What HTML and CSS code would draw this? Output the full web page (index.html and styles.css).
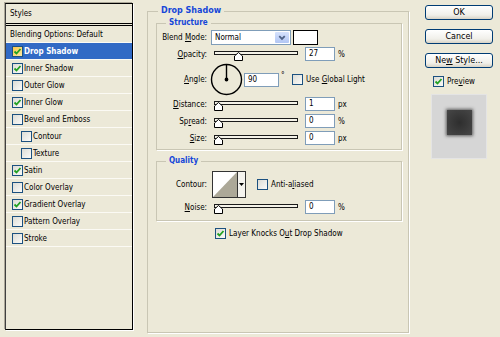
FILE: index.html
```html
<html>
<head>
  <title>Layer Style</title>
  <link rel="stylesheet" href="styles.css">
</head>
<body>
<div class="dialog">
  <div class="styles-list">
    <div class="list-head">Styles</div>
    <div class="item plain">Blending Options: Default</div>
    <div class="item selected"><span class="check focus"><svg viewBox="0 0 9 9"><polyline points="1.5,4.5 3.5,6.5 7.5,2"/></svg></span>Drop Shadow</div>
    <div class="item"><span class="check"><svg viewBox="0 0 9 9"><polyline points="1.5,4.5 3.5,6.5 7.5,2"/></svg></span>Inner Shadow</div>
    <div class="item"><span class="check"></span>Outer Glow</div>
    <div class="item"><span class="check"><svg viewBox="0 0 9 9"><polyline points="1.5,4.5 3.5,6.5 7.5,2"/></svg></span>Inner Glow</div>
    <div class="item"><span class="check"></span>Bevel and Emboss</div>
    <div class="item sub"><span class="check"></span>Contour</div>
    <div class="item sub"><span class="check"></span>Texture</div>
    <div class="item"><span class="check"><svg viewBox="0 0 9 9"><polyline points="1.5,4.5 3.5,6.5 7.5,2"/></svg></span>Satin</div>
    <div class="item"><span class="check"></span>Color Overlay</div>
    <div class="item"><span class="check"><svg viewBox="0 0 9 9"><polyline points="1.5,4.5 3.5,6.5 7.5,2"/></svg></span>Gradient Overlay</div>
    <div class="item"><span class="check"></span>Pattern Overlay</div>
    <div class="item"><span class="check"></span>Stroke</div>
  </div>

  <fieldset class="group effect">
    <legend>Drop Shadow</legend>

    <fieldset class="group structure">
      <legend>Structure</legend>
      <div class="row blend">
        <label class="lbl"><span>Blend <u>M</u>ode:</span></label>
        <div class="select">
          <span class="select-value">Normal</span>
          <span class="select-drop"><svg viewBox="0 0 12 12"><polyline points="3,4.5 6,7.5 9,4.5"/></svg></span>
        </div>
        <span class="swatch"></span>
      </div>
      <div class="row slider-row">
        <label class="lbl"><span><u>O</u>pacity:</span></label>
        <div class="slider">
          <div class="track"></div>
          <svg class="thumb" style="left: 20px" viewBox="0 0 9 9"><polygon points="0.5,4 4.5,0.5 8.5,4 8.5,8.5 0.5,8.5"/></svg>
        </div>
        <span class="field">27</span>
        <span class="unit">%</span>
      </div>
      <div class="row angle">
        <label class="lbl"><span><u>A</u>ngle:</span></label>
        <svg class="dial" viewBox="0 0 33 33">
          <circle cx="16.5" cy="16.5" r="15" />
          <line x1="16.5" y1="16.5" x2="16.5" y2="2" />
          <circle class="dot" cx="16.5" cy="16.5" r="1.2" />
        </svg>
        <span class="field wide">90</span>
        <span class="deg">°</span>
        <span class="check"></span>
        <span class="check-text">Use <u>G</u>lobal Light</span>
      </div>
      <div class="row slider-row first">
        <label class="lbl"><span><u>D</u>istance:</span></label>
        <div class="slider">
          <div class="track"></div>
          <svg class="thumb" style="left: 0px" viewBox="0 0 9 9"><polygon points="0.5,4 4.5,0.5 8.5,4 8.5,8.5 0.5,8.5"/></svg>
        </div>
        <span class="field">1</span>
        <span class="unit">px</span>
      </div>
      <div class="row slider-row">
        <label class="lbl"><span>Sp<u>r</u>ead:</span></label>
        <div class="slider">
          <div class="track"></div>
          <svg class="thumb" style="left: 0px" viewBox="0 0 9 9"><polygon points="0.5,4 4.5,0.5 8.5,4 8.5,8.5 0.5,8.5"/></svg>
        </div>
        <span class="field">0</span>
        <span class="unit">%</span>
      </div>
      <div class="row slider-row">
        <label class="lbl"><span><u>S</u>ize:</span></label>
        <div class="slider">
          <div class="track"></div>
          <svg class="thumb" style="left: 0px" viewBox="0 0 9 9"><polygon points="0.5,4 4.5,0.5 8.5,4 8.5,8.5 0.5,8.5"/></svg>
        </div>
        <span class="field">0</span>
        <span class="unit">px</span>
      </div>
    </fieldset>

    <fieldset class="group quality">
      <legend>Quality</legend>
      <div class="row contour-row">
        <label class="lbl"><span>Contour:</span></label>
        <div class="contour">
          <svg class="curve" viewBox="0 0 24 25" preserveAspectRatio="none"><polygon points="0,25 24,0 24,25"/></svg>
          <span class="contour-drop"><svg viewBox="0 0 7 4"><polygon points="0,0 7,0 3.5,4"/></svg></span>
        </div>
        <span class="check"></span>
        <span class="check-text">Anti-a<u>l</u>iased</span>
      </div>
      <div class="row slider-row noise">
        <label class="lbl"><span><u>N</u>oise:</span></label>
        <div class="slider">
          <div class="track"></div>
          <svg class="thumb" style="left: 0px" viewBox="0 0 9 9"><polygon points="0.5,4 4.5,0.5 8.5,4 8.5,8.5 0.5,8.5"/></svg>
        </div>
        <span class="field">0</span>
        <span class="unit">%</span>
      </div>
    </fieldset>

    <div class="row knockout">
      <span class="check"><svg viewBox="0 0 9 9"><polyline points="1.5,4.5 3.5,6.5 7.5,2"/></svg></span>
      <span class="check-text">Layer Knocks O<u>u</u>t Drop Shadow</span>
    </div>
  </fieldset>

  <div class="actions">
    <button class="btn default">OK</button>
    <button class="btn">Cancel</button>
    <button class="btn">Ne<u>w</u> Style...</button>
    <div class="preview-toggle">
      <span class="check"><svg viewBox="0 0 9 9"><polyline points="1.5,4.5 3.5,6.5 7.5,2"/></svg></span>
      <span class="check-text">Pre<u>v</u>iew</span>
    </div>
    <div class="preview">
      <div class="preview-square"></div>
    </div>
  </div>
</div>
</body>
</html>
```

FILE: styles.css
```css
body {
  margin: 0;
  background-color: #ece9d8;
  color: #000;
  font-family: "DejaVu Sans Condensed", "DejaVu Sans", sans-serif;
  font-stretch: condensed;
  font-size: 8px;
}
u {
  text-underline-offset: 1px;
}
.dialog {
  display: flex;
  align-items: flex-start;
  padding: 3px 0 0 5px;
}

/* styles list */
.styles-list {
  width: 128px;
  height: 327px;
  box-sizing: border-box;
  border: 1px solid #000;
  border-left-color: #404040;
  box-shadow: -1px -1px 0 #aca899, 1px 1px 0 #fff;
  flex: none;
}
.list-head {
  height: 19px;
  line-height: 19px;
  padding-left: 4px;
  border-bottom: 3px double #000;
}
.item {
  height: 16px;
  border-bottom: 1px solid #fbfaf4;
  display: flex;
  align-items: center;
  gap: 1px;
  padding-left: 6px;
  white-space: nowrap;
}
.item.plain {
  padding-left: 4px;
}
.item.sub {
  padding-left: 15px;
}
.item.selected {
  background: #316ac5;
  color: #fff;
  font-weight: bold;
}

/* checkbox */
.check {
  width: 11px;
  height: 11px;
  box-sizing: border-box;
  border: 1px solid #1c5180;
  background: linear-gradient(135deg, #dcdcd5, #fafaf8);
  display: inline-flex;
  flex: none;
}
.check.focus {
  background: linear-gradient(135deg, #f9c74a, #fde9a5);
}
.check svg {
  width: 9px;
  height: 9px;
}
.check polyline {
  fill: none;
  stroke: #21a121;
  stroke-width: 1.8;
}
.check-text {
  margin-left: 3px;
  white-space: nowrap;
}

/* group boxes */
.group {
  margin: 0;
  padding: 0 6px;
  border: 1px solid #c9c6b4;
  box-shadow: 1px 1px 0 #fff;
  min-width: 0;
}
.group legend {
  padding: 0 3px;
  margin-left: 3px;
  line-height: 10px;
  color: #1546d9;
  font-weight: bold;
}
.effect {
  width: 262px;
  height: 327px;
  box-sizing: border-box;
  margin: 3px 0 0 14px;
  padding: 0 6px 0 8px;
  flex: none;
}
.effect > legend {
  margin-left: 2px;
  font-stretch: normal;
  font-family: "DejaVu Sans", sans-serif;
}
.structure {
  margin-top: 2px;
  padding-bottom: 4px;
}
.quality {
  margin-top: 6px;
  padding-bottom: 6px;
}

/* rows */
.row {
  display: flex;
  align-items: center;
}
.lbl {
  width: 44px;
  margin-right: 4px;
  display: flex;
  justify-content: flex-end;
  white-space: nowrap;
  flex: none;
}
.blend {
  height: 15px;
  margin-top: 2px;
}
.select {
  width: 80px;
  height: 15px;
  box-sizing: border-box;
  border: 1px solid #7f9db9;
  background: #fff;
  display: flex;
  align-items: center;
  margin-right: 2px;
}
.select-value {
  flex: 1;
  padding-left: 3px;
}
.select-drop {
  width: 14px;
  height: 11px;
  margin-right: 1px;
  border-radius: 1px;
  background: linear-gradient(#d6e2fc, #b2c6f4);
  display: flex;
}
.select-drop svg {
  width: 14px;
  height: 11px;
}
.select-drop polyline {
  fill: none;
  stroke: #4d6185;
  stroke-width: 2;
}
.swatch {
  width: 25px;
  height: 15px;
  box-sizing: border-box;
  border: 1px solid #000;
  background: #fff;
}
.field {
  width: 30px;
  height: 14px;
  box-sizing: border-box;
  border: 1px solid #7f9db9;
  background: #fff;
  padding-left: 3px;
  line-height: 12px;
  margin-left: 7px;
}
.field.wide {
  width: 35px;
  margin-left: 1px;
}
.unit {
  margin-left: 3px;
}
.slider-row {
  height: 14px;
  margin-top: 3px;
}
.slider-row.first {
  margin-top: 0;
}
.slider-row:nth-child(3) {
  margin-top: 2px;
}
.slider {
  position: relative;
  width: 84px;
  height: 14px;
  margin-left: 3px;
}
.track {
  margin-top: 4px;
  height: 4px;
  box-sizing: border-box;
  border: 1px solid #1a1a1a;
  background: #f4f2e8;
}
.thumb {
  position: absolute;
  top: 5px;
  width: 9px;
  height: 9px;
}
.thumb polygon {
  fill: #fff;
  stroke: #000;
  stroke-width: 1;
}
.angle {
  height: 35px;
  margin-top: 1px;
}
.dial {
  width: 33px;
  height: 33px;
  margin-left: -1px;
}
.dial circle,
.dial line {
  fill: none;
  stroke: #000;
  stroke-width: 1.4;
}
.dial .dot {
  fill: #000;
}
.deg {
  width: 11px;
  margin-left: 2px;
  align-self: flex-start;
  margin-top: 9px;
}

/* quality */
.contour-row {
  height: 27px;
  margin-top: 5px;
}
.contour {
  width: 34px;
  height: 27px;
  box-sizing: border-box;
  border: 1px solid #333;
  display: flex;
  margin-left: 1px;
  margin-right: 11px;
}
.curve {
  width: 24px;
  height: 25px;
  background: #fff;
}
.curve polygon {
  fill: #aca898;
}
.contour-drop {
  flex: 1;
  border-left: 1px solid #333;
  background: #f4f3ee;
  display: flex;
  align-items: center;
  justify-content: center;
}
.contour-drop svg {
  width: 5px;
  height: 3px;
}
.noise {
  margin-top: 2px;
}
.knockout {
  height: 12px;
  margin: 6px 0 0 59px;
}

/* buttons and preview */
.actions {
  margin: 2px 0 0 16px;
  width: 68px;
  display: flex;
  flex-direction: column;
}
.btn {
  width: 68px;
  height: 15px;
  padding: 0;
  margin-bottom: 9px;
  border: 1px solid #003c74;
  border-radius: 3px;
  background: linear-gradient(#ffffff, #f0efe9 70%, #d8d3c6);
  font-family: "DejaVu Sans", sans-serif;
  font-size: 8px;
  color: #000;
  line-height: 12px;
}
.preview-toggle {
  display: flex;
  align-items: center;
  margin: -2px 0 0 8px;
  height: 13px;
}
.preview {
  margin: 6px 0 0 6px;
  width: 56px;
  height: 65px;
  box-sizing: border-box;
  border: 1px solid #e4e4e4;
  background: #d6d6d6;
  display: flex;
  justify-content: center;
}
.preview-square {
  width: 25px;
  height: 25px;
  margin-top: 15px;
  background: radial-gradient(#2e2e2e, #474747);
  box-shadow: 0 0 3px 1px rgba(40, 40, 40, 0.7);
}
```
